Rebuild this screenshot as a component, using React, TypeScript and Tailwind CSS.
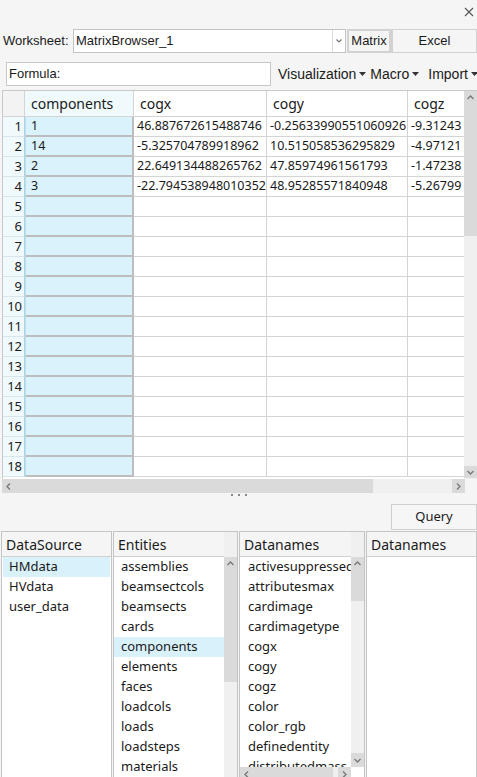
import React from "react";

const rows = [
  ["1", "46.887672615488746", "-0.25633990551060926", "-9.31243"],
  ["14", "-5.325704789918962", "10.515058536295829", "-4.97121"],
  ["2", "22.649134488265762", "47.85974961561793", "-1.47238"],
  ["3", "-22.794538948010352", "48.95285571840948", "-5.26799"],
];

const entities = [
  "assemblies",
  "beamsectcols",
  "beamsects",
  "cards",
  "components",
  "elements",
  "faces",
  "loadcols",
  "loads",
  "loadsteps",
  "materials",
];

const datanames = [
  "activesuppressed",
  "attributesmax",
  "cardimage",
  "cardimagetype",
  "cogx",
  "cogy",
  "cogz",
  "color",
  "color_rgb",
  "definedentity",
  "distributedmass",
];

const Caret = () => (
  <svg width="7" height="4" viewBox="0 0 7 4" className="ml-[3px]">
    <path d="M0 0 L7 0 L3.5 4 Z" fill="#333" />
  </svg>
);

const UpArrow = () => (
  <svg width="7" height="5" viewBox="0 0 7 5">
    <path d="M0.5 4 L3.5 1 L6.5 4" stroke="#777" strokeWidth="1.3" fill="none" />
  </svg>
);
const DownArrow = () => (
  <svg width="7" height="5" viewBox="0 0 7 5">
    <path d="M0.5 1 L3.5 4 L6.5 1" stroke="#777" strokeWidth="1.3" fill="none" />
  </svg>
);
const LeftArrow = () => (
  <svg width="5" height="7" viewBox="0 0 5 7">
    <path d="M4 0.5 L1 3.5 L4 6.5" stroke="#777" strokeWidth="1.3" fill="none" />
  </svg>
);
const RightArrow = () => (
  <svg width="5" height="7" viewBox="0 0 5 7">
    <path d="M1 0.5 L4 3.5 L1 6.5" stroke="#777" strokeWidth="1.3" fill="none" />
  </svg>
);

export default function App() {
  const gridRows = Array.from({ length: 18 }, (_, i) => i);
  const seg = { fontFamily: '"Noto Sans", "Open Sans", sans-serif' };
  return (
    <div
      className="w-[477px] h-[777px] bg-[#f5f5f5] overflow-hidden text-[#1a1a1a]"
      style={{ fontFamily: '"Liberation Sans", Arial, sans-serif' }}
    >
      {/* top bar */}
      <div className="h-[29px] flex justify-end items-start pt-[7px] pr-[3px]">
        <svg width="10" height="10" viewBox="0 0 10 10">
          <path d="M1 1 L9 9 M9 1 L1 9" stroke="#555" strokeWidth="1.1" />
        </svg>
      </div>

      {/* worksheet row */}
      <div className="h-[24px] flex items-stretch text-[13px]">
        <div className="w-[73px] shrink-0 pl-[3px] flex items-center">Worksheet:</div>
        <div className="w-[273px] shrink-0 bg-white border border-[#c3c3c3] flex items-center">
          <div className="flex-1 pl-[2px]">MatrixBrowser_1</div>
          <div className="w-[13px] h-full border-l border-[#dcdcdc] flex items-center justify-center">
            <svg width="6" height="4" viewBox="0 0 6 4">
              <path d="M0.5 0.5 L3 3 L5.5 0.5" stroke="#777" strokeWidth="1.2" fill="none" />
            </svg>
          </div>
        </div>
        <div className="w-[44px] shrink-0 ml-[1px] border-2 border-[#d2d2d2] bg-[#f5f5f5] flex items-center justify-center">
          Matrix
        </div>
        <div className="flex-1 border border-[#d2d2d2] border-l-2 bg-[#f5f5f5] flex items-center justify-center">
          Excel
        </div>
      </div>

      {/* formula row */}
      <div className="h-[24px] mt-[9px] flex items-center text-[13px] whitespace-nowrap">
        <div className="ml-[6px] w-[265px] shrink-0 h-[24px] bg-white border border-[#c8c8c8] flex items-center pl-[2px]">
          Formula:
        </div>
        <div className="ml-[7px] shrink-0 flex items-center text-[14px]">
          Visualization
          <Caret />
        </div>
        <div className="ml-[4px] shrink-0 flex items-center text-[14px]">
          Macro
          <Caret />
        </div>
        <div className="ml-[9px] shrink-0 flex items-center text-[14px]">
          Import
          <Caret />
        </div>
      </div>

      {/* grid */}
      <div className="mt-[4px] ml-[2px] h-[389px] flex overflow-hidden border-t border-[#c9c9c9] text-[12.5px]" style={seg}>
        <div className="w-[462px] border-l border-[#c9c9c9] bg-white overflow-hidden">
          {/* header */}
          <div className="h-[26px] flex border-b border-[#d4d4d4]">
            <div className="w-[22px] bg-[#f3f3f3] border-r border-[#d4d4d4]" />
            <div className="w-[109px] bg-[#f0fafd] border-r border-[#d4d4d4] pl-[6px] flex items-center text-[14px]">
              components
            </div>
            <div className="w-[133px] border-r border-[#d4d4d4] pl-[6px] flex items-center text-[14px]">cogx</div>
            <div className="w-[141px] border-r border-[#d4d4d4] pl-[6px] flex items-center text-[14px]">cogy</div>
            <div className="flex-1 pl-[6px] flex items-center text-[14px]">cogz</div>
          </div>
          {gridRows.map((i) => {
            const r = rows[i];
            return (
              <div key={i} className="h-[20px] flex">
                <div className="w-[22px] bg-[#f0f9fc] border-r border-b border-r-[#a6d6ea] border-b-[#d6e6ec] flex items-center justify-end pr-[2px] text-[13px]">
                  {i + 1}
                </div>
                <div className="w-[109px] bg-[#daf2fb] border-l border-l-[#c4dde6] border-r-2 border-b-2 border-[#bdbdbd] pl-[5px] flex items-center">
                  {r ? r[0] : ""}
                </div>
                <div className="w-[133px] border-r border-b border-[#d4d4d4] pl-[3px] flex items-center whitespace-nowrap overflow-hidden">
                  {r ? r[1] : ""}
                </div>
                <div className="w-[141px] border-r border-b border-[#d4d4d4] pl-[3px] flex items-center whitespace-nowrap overflow-hidden">
                  {r ? r[2] : ""}
                </div>
                <div className="flex-1 border-b border-[#d4d4d4] pl-[3px] flex items-center whitespace-nowrap overflow-hidden">
                  {r ? r[3] : ""}
                </div>
              </div>
            );
          })}
        </div>
        {/* vertical scrollbar */}
        <div className="w-[13px] flex flex-col bg-[#f0f0f0]">
          <div className="h-[145px] bg-[#dadada] flex justify-center pt-[4px]">
            <UpArrow />
          </div>
          <div className="flex-1" />
          <div className="h-[12px] bg-[#dadada] flex items-center justify-center mb-[1px]">
            <DownArrow />
          </div>
        </div>
      </div>

      {/* horizontal scrollbar */}
      <div className="ml-[2px] h-[14px] flex">
        <div className="w-[371px] bg-[#dadada] flex items-center pl-[4px]">
          <LeftArrow />
        </div>
        <div className="w-[79px] bg-[#f0f0f0]" />
        <div className="w-[13px] bg-[#dadada] flex items-center justify-center">
          <RightArrow />
        </div>
      </div>

      {/* splitter dots */}
      <div className="h-[11px] flex justify-center items-start pt-[1px] gap-[5px]">
        <div className="w-[2px] h-[2px] bg-[#888]" />
        <div className="w-[2px] h-[2px] bg-[#888]" />
        <div className="w-[2px] h-[2px] bg-[#888]" />
      </div>

      {/* query button */}
      <div className="h-[26px] flex justify-end">
        <div
          className="w-[86px] border border-[#cfcfcf] bg-[#f6f6f6] flex items-center justify-center text-[13px]"
          style={seg}
        >
          Query
        </div>
      </div>

      {/* panels */}
      <div className="mt-[1px] h-[260px] flex text-[13px]" style={seg}>
        {/* DataSource */}
        <div className="ml-[1px] w-[111px] border border-[#c4c4c4] bg-white flex flex-col">
          <div className="h-[25px] shrink-0 bg-[#f5f5f5] border-b border-[#d0d0d0] pl-[4px] pt-[1px] flex items-center text-[14px]">
            DataSource
          </div>
          {["HMdata", "HVdata", "user_data"].map((d, i) => (
            <div
              key={d}
              className={
                "h-[20px] shrink-0 pl-[6px] flex items-center mx-[1px] " + (i === 0 ? "bg-[#d9f1fb]" : "")
              }
            >
              {d}
            </div>
          ))}
        </div>
        {/* Entities */}
        <div className="ml-[1px] w-[125px] border border-[#c4c4c4] bg-white flex">
          <div className="w-[111px] flex flex-col overflow-hidden">
            <div className="h-[25px] shrink-0 bg-[#f5f5f5] border-b border-[#d0d0d0] pl-[4px] pt-[1px] flex items-center text-[14px]">
              Entities
            </div>
            {entities.map((e) => (
              <div
                key={e}
                className={
                  "h-[20px] pl-[7px] flex items-center shrink-0 " +
                  (e === "components" ? "bg-[#d9f1fb]" : "")
                }
              >
                {e}
              </div>
            ))}
          </div>
          <div className="w-[13px] flex flex-col bg-[#f0f0f0]">
            <div className="h-[25px] shrink-0 bg-[#f0f0f0]" />
            <div className="h-[125px] shrink-0 bg-[#dadada] flex justify-center pt-[4px]">
              <UpArrow />
            </div>
            <div className="flex-1" />
          </div>
        </div>
        {/* Datanames */}
        <div className="ml-[1px] w-[126px] border border-[#c4c4c4] bg-white flex flex-col">
          <div className="flex h-[235px] shrink-0">
            <div className="w-[111px] flex flex-col overflow-hidden">
              <div className="h-[25px] shrink-0 bg-[#f5f5f5] border-b border-[#d0d0d0] pl-[4px] pt-[1px] flex items-center text-[14px]">
                Datanames
              </div>
              {datanames.map((e) => (
                <div key={e} className="h-[20px] pl-[8px] flex items-center shrink-0 whitespace-nowrap">
                  {e}
                </div>
              ))}
            </div>
            <div className="w-[13px] flex flex-col bg-[#f0f0f0]">
              <div className="h-[25px] shrink-0" />
              <div className="h-[44px] shrink-0 bg-[#dadada] flex justify-center pt-[4px]">
                <UpArrow />
              </div>
              <div className="flex-1" />
              <div className="h-[14px] shrink-0 bg-[#dadada] flex items-center justify-center">
                <DownArrow />
              </div>
            </div>
          </div>
          <div className="h-[14px] shrink-0 flex">
            <div className="w-[93px] bg-[#dadada] flex items-center pl-[4px]">
              <LeftArrow />
            </div>
            <div className="w-[5px] bg-[#f0f0f0]" />
            <div className="w-[13px] bg-[#dadada] flex items-center justify-center">
              <RightArrow />
            </div>
          </div>
        </div>
        {/* Datanames 2 */}
        <div className="ml-[1px] flex-1 border border-[#c4c4c4] bg-white flex flex-col">
          <div className="h-[25px] shrink-0 bg-[#f5f5f5] border-b border-[#d0d0d0] pl-[4px] pt-[1px] flex items-center text-[14px]">
            Datanames
          </div>
        </div>
      </div>
    </div>
  );
}
